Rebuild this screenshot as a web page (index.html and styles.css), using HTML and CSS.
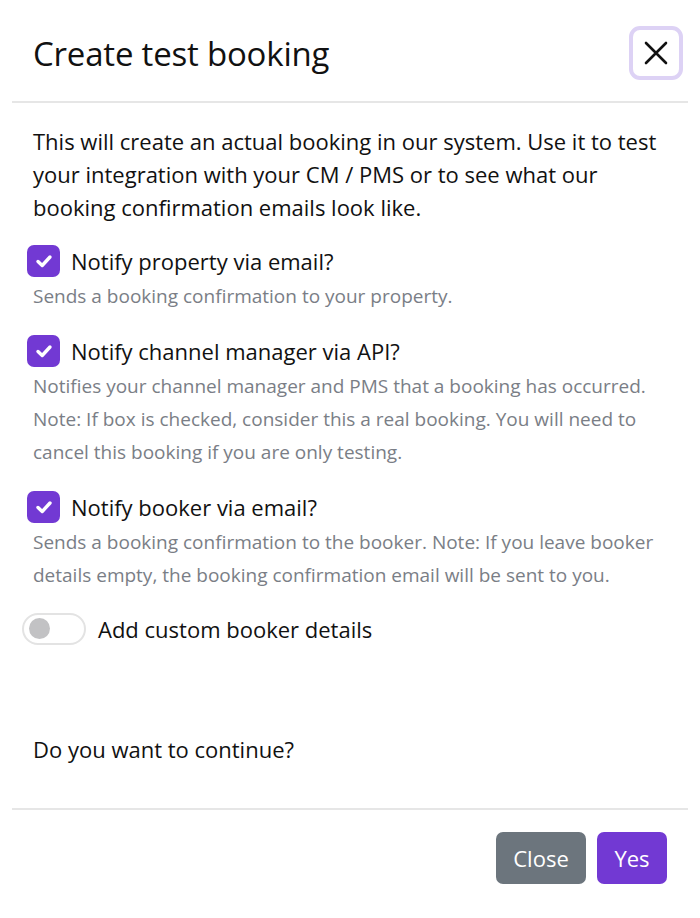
FILE: index.html
```html
<!DOCTYPE html>
<html>
<head>
<meta charset="utf-8">
<link rel="stylesheet" href="styles.css">
</head>
<body>
<div class="modal">
  <div class="modal-header">
    <h1 class="title">Create test booking</h1>
    <button class="btn-x" aria-label="Close">
      <svg width="24" height="24" viewBox="0 0 24 24"><path d="M2 2 L22 22 M22 2 L2 22" stroke="#111" stroke-width="2.6" stroke-linecap="round" fill="none"/></svg>
    </button>
  </div>
  <div class="modal-body">
    <p class="intro">This will create an actual booking in our system. Use it to test your integration with your CM / PMS or to see what our booking confirmation emails look like.</p>
    <div class="option">
      <label class="check-row"><span class="checkbox"><svg width="32" height="32" viewBox="0 0 32 32"><path d="M10 16.5 L14.2 20.5 L22 12" stroke="#fff" stroke-width="3.4" fill="none" stroke-linecap="round" stroke-linejoin="round"/></svg></span><span class="label">Notify property via email?</span></label>
      <p class="desc">Sends a booking confirmation to your property.</p>
    </div>
    <div class="option">
      <label class="check-row"><span class="checkbox"><svg width="32" height="32" viewBox="0 0 32 32"><path d="M10 16.5 L14.2 20.5 L22 12" stroke="#fff" stroke-width="3.4" fill="none" stroke-linecap="round" stroke-linejoin="round"/></svg></span><span class="label">Notify channel manager via API?</span></label>
      <p class="desc">Notifies your channel manager and PMS that a booking has occurred. Note: If box is checked, consider this a real booking. You will need to cancel this booking if you are only testing.</p>
    </div>
    <div class="option">
      <label class="check-row"><span class="checkbox"><svg width="32" height="32" viewBox="0 0 32 32"><path d="M10 16.5 L14.2 20.5 L22 12" stroke="#fff" stroke-width="3.4" fill="none" stroke-linecap="round" stroke-linejoin="round"/></svg></span><span class="label">Notify booker via email?</span></label>
      <p class="desc">Sends a booking confirmation to the booker. Note: If you leave booker details empty, the booking confirmation email will be sent to you.</p>
    </div>
    <label class="switch-row"><span class="switch"><span class="knob"></span></span><span class="label">Add custom booker details</span></label>
    <p class="question">Do you want to continue?</p>
  </div>
  <div class="modal-footer">
    <button class="btn btn-secondary">Close</button>
    <button class="btn btn-primary">Yes</button>
  </div>
</div>
</body>
</html>
```
FILE: styles.css
```css
* { box-sizing: border-box; }
html, body { margin: 0; padding: 0; background: #fff; }
body {
  font-family: "Open Sans", "Noto Sans", sans-serif;
  color: #1c1c1c;
  width: 700px;
  height: 918px;
  overflow: hidden;
}
.modal {
  margin: 0 12px;
}
.modal-header {
  height: 103px;
  border-bottom: 2px solid #e6e6e6;
  display: flex;
  align-items: center;
  justify-content: space-between;
  padding: 8px 5px 0 21px;
}
.title {
  margin: 0;
  font-weight: 400;
  font-size: 33px;
  color: #111;
  letter-spacing: -0.2px;
  padding-bottom: 2px;
}
.btn-x {
  width: 54px;
  height: 54px;
  border: 4px solid #ddd2f5;
  border-radius: 11px;
  background: #fff;
  display: flex;
  align-items: center;
  justify-content: center;
  padding: 0;
  margin-bottom: 3px;
}
.modal-body {
  padding: 22px 21px 0 21px;
  display: flex;
  flex-direction: column;
}
.intro {
  margin: 0;
  font-size: 22px;
  line-height: 33px;
  color: #111;
}
.option { margin-top: 20px; }
.option + .option { margin-top: 21px; }
.check-row {
  display: flex;
  align-items: center;
  gap: 11px;
  height: 33px;
  margin-left: -6px;
}
.checkbox {
  width: 33px;
  height: 32px;
  border-radius: 7px;
  background: #7239d3;
  display: flex;
  align-items: center;
  justify-content: center;
}
.label {
  font-size: 22px;
  color: #111;
}
.desc {
  margin: 3px 0 0 0;
  font-size: 19px;
  line-height: 33px;
  color: #7a7e86;
}
.switch-row {
  display: flex;
  align-items: center;
  gap: 12px;
  margin-top: 20px;
  margin-left: -11px;
  height: 33px;
}
.switch {
  width: 64px;
  height: 32px;
  border: 2px solid #e3e3e3;
  border-radius: 16px;
  background: #fff;
  display: flex;
  align-items: center;
  padding-left: 5px;
}
.knob {
  width: 21px;
  height: 21px;
  border-radius: 50%;
  background: #c2c2c4;
}
.question {
  margin: 88px 0 0 0;
  font-size: 22px;
  line-height: 33px;
  color: #111;
}
.modal-footer {
  margin-top: 42px;
  border-top: 2px solid #e6e6e6;
  display: flex;
  justify-content: flex-end;
  gap: 11px;
  padding: 22px 21px 0 0;
}
.btn {
  height: 52px;
  border: none;
  border-radius: 7px;
  font-family: "Open Sans", "Noto Sans", sans-serif;
  font-size: 22px;
  color: #fff;
  padding: 0 17px;
}
.btn-secondary { background: #6c757d; width: 90px; }
.btn-primary { background: #7239d3; width: 70px; }
```
